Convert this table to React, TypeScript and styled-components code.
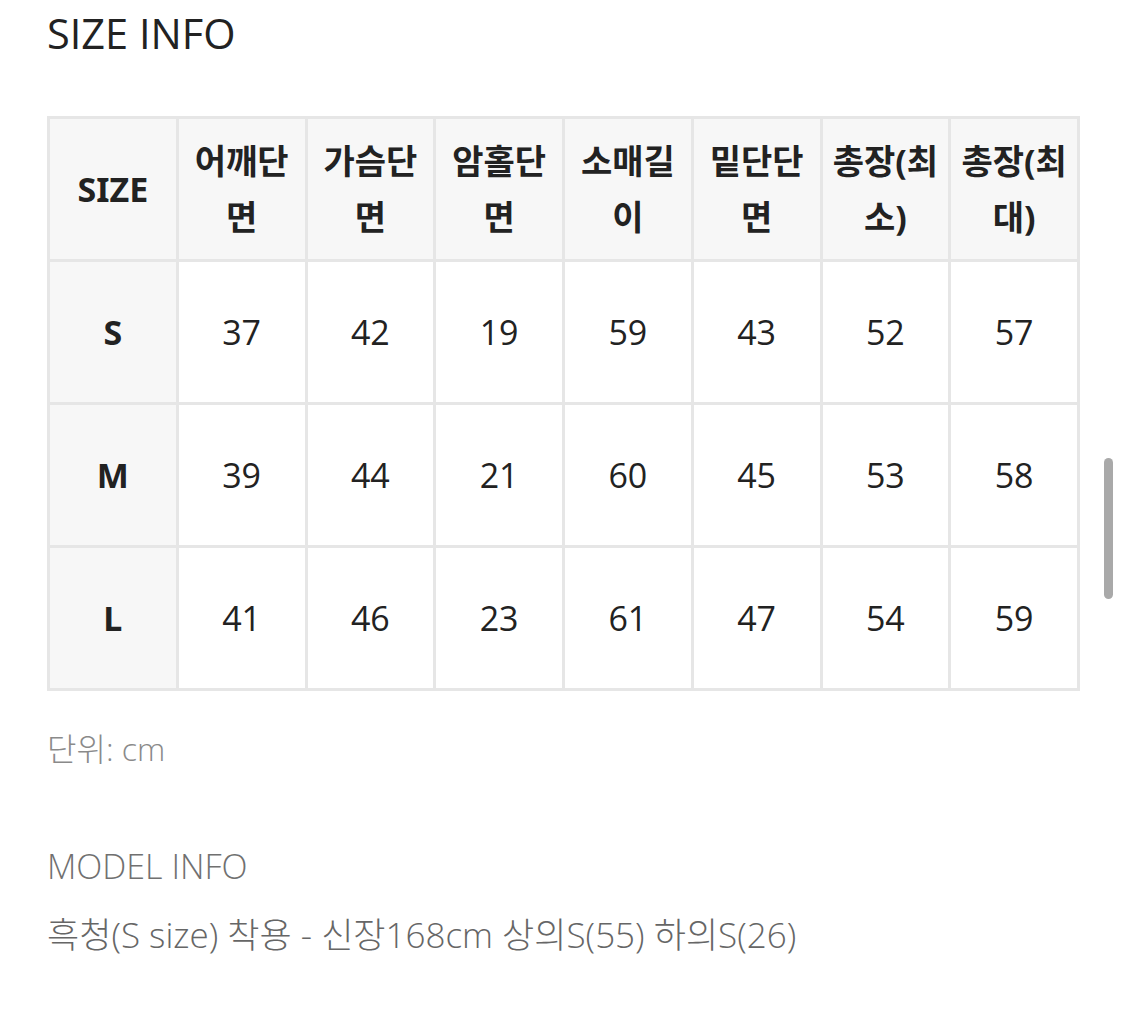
import React from "react";
import styled, { createGlobalStyle } from "styled-components";

const GlobalStyle = createGlobalStyle`
  html, body {
    margin: 0;
    padding: 0;
    background: #ffffff;
  }
  body {
    font-family: "Open Sans", "Noto Sans CJK KR", sans-serif;
    color: #222222;
  }
`;

const Page = styled.div`
  width: 1125px;
  height: 1023px;
  padding: 0 0 0 47px;
  box-sizing: border-box;
  overflow: hidden;
`;

const Title = styled.h2`
  margin: 0;
  padding-top: 7px;
  height: 116px;
  box-sizing: border-box;
  font-size: 41.5px;
  font-weight: 400;
  line-height: 52px;
  color: #222222;
`;

const Table = styled.table`
  width: 1033px;
  table-layout: fixed;
  border-collapse: collapse;
  border: 3px solid #e6e6e6;
`;

const Cell = styled.td<{ $head?: boolean; $label?: boolean }>`
  height: 140px;
  padding: 0 4px;
  border: 3px solid #e6e6e6;
  text-align: center;
  vertical-align: middle;
  background: ${(p) => (p.$head || p.$label ? "#f7f7f7" : "#ffffff")};
  font-family: ${(p) =>
    p.$head || p.$label
      ? `"Noto Sans", "Noto Sans CJK KR", sans-serif`
      : `"Open Sans", "Noto Sans CJK KR", sans-serif`};
  font-size: 34px;
  line-height: 56px;
  font-weight: ${(p) => (p.$head || p.$label ? 700 : 400)};
  color: #222222;
  word-break: break-all;
`;

const Unit = styled.p`
  margin: 28px 0 0;
  font-size: 32px;
  font-weight: 300;
  line-height: 60px;
  color: #8a8a8a;
`;

const ModelTitle = styled.p`
  margin: 55px 0 0;
  font-size: 34px;
  font-weight: 300;
  line-height: 64px;
  color: #707070;
`;

const ModelText = styled.p`
  margin: 5px 0 0;
  font-size: 35px;
  font-weight: 300;
  line-height: 64px;
  color: #666666;
`;

const ScrollThumb = styled.div`
  position: fixed;
  left: 1104px;
  top: 458px;
  width: 9px;
  height: 141px;
  border-radius: 5px;
  background: #a9a9a9;
`;

const headers = [
  "SIZE",
  "어깨단면",
  "가슴단면",
  "암홀단면",
  "소매길이",
  "밑단단면",
  "총장(최소)",
  "총장(최대)",
];

const rows: [string, number[]][] = [
  ["S", [37, 42, 19, 59, 43, 52, 57]],
  ["M", [39, 44, 21, 60, 45, 53, 58]],
  ["L", [41, 46, 23, 61, 47, 54, 59]],
];

export default function App() {
  return (
    <>
      <GlobalStyle />
      <Page>
        <Title>SIZE INFO</Title>
        <Table>
          <thead>
            <tr>
              {headers.map((h) => (
                <Cell as="th" $head key={h}>
                  {h}
                </Cell>
              ))}
            </tr>
          </thead>
          <tbody>
            {rows.map(([size, values]) => (
              <tr key={size}>
                <Cell $label>{size}</Cell>
                {values.map((v, i) => (
                  <Cell key={i}>{v}</Cell>
                ))}
              </tr>
            ))}
          </tbody>
        </Table>
        <Unit>단위: cm</Unit>
        <ModelTitle>MODEL INFO</ModelTitle>
        <ModelText>흑청(S size) 착용 - 신장168cm 상의S(55) 하의S(26)</ModelText>
      </Page>
      <ScrollThumb />
    </>
  );
}
